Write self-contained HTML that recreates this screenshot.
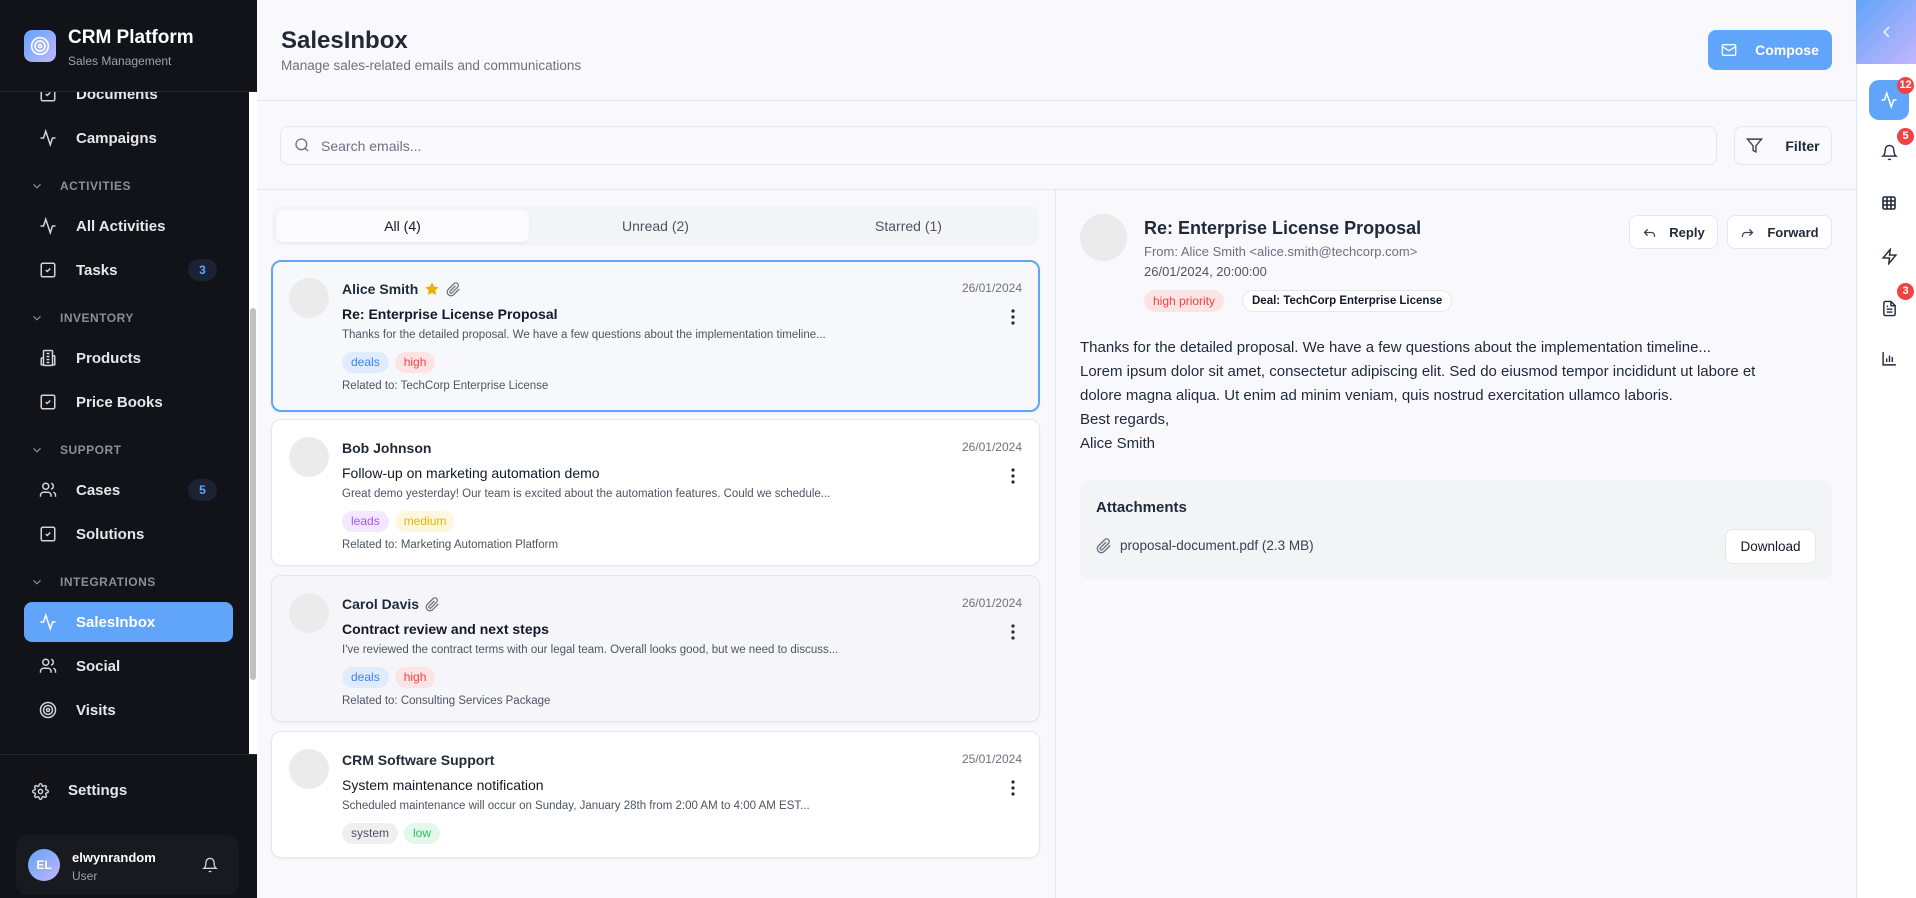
<!DOCTYPE html>
<html><head><meta charset="utf-8">
<style>
*{box-sizing:border-box;margin:0;padding:0}
body{width:1916px;height:898px;overflow:hidden;font-family:"Liberation Sans",sans-serif;background:#f9f9fd;position:relative;color:#1f2937}
.a{position:absolute}
.sb{left:0;top:0;width:257px;height:898px;background:#111318;color:#e5e7eb}
.nav{position:absolute;left:0;width:249px;height:40px;display:flex;align-items:center;font-size:15px;font-weight:bold;color:#e5e7eb}
.nav svg{position:absolute;left:39px}
.nav span{position:absolute;left:76px}
.sec{position:absolute;left:0;font-size:12px;font-weight:bold;color:#8b8f99;letter-spacing:.5px}
.sec svg{position:absolute;left:30px;top:0}
.sec span{position:absolute;left:60px;top:0}
.badge{position:absolute;left:188px;width:29px;height:22px;border-radius:11px;background:#1a2233;color:#60a5fa;font-size:12px;font-weight:bold;text-align:center;line-height:22px}
.card{position:absolute;left:271px;width:769px;border:1px solid #e5e7eb;border-radius:10px;background:#fff;box-shadow:0 1px 2px rgba(0,0,0,.05)}
.card .av{position:absolute;left:17px;top:17px;width:40px;height:40px;border-radius:50%;background:#ebebeb}
.card .nm{position:absolute;left:70px;top:20px;font-size:14px;font-weight:bold;color:#1f2937;display:flex;align-items:center;gap:6px}
.card .dt{position:absolute;right:17px;top:20px;font-size:12px;color:#6b7280}
.card .sj{position:absolute;left:70px;top:45px;font-size:14px;color:#111827}
.card .pv{position:absolute;left:70px;top:68px;font-size:11.5px;color:#4b5563}
.card .tg{position:absolute;left:70px;top:91px;display:flex;gap:6px}
.tag{height:21px;padding:0 9px;border-radius:11px;font-size:12px;line-height:21px}
.card .rl{position:absolute;left:70px;top:119px;font-size:11.5px;color:#4b5563}
.card .kb{position:absolute;right:24px;top:48px}
.btn{position:absolute;border:1px solid #e5e7eb;border-radius:8px;background:#fff;font-size:14px;font-weight:bold;color:#1f2937;display:flex;align-items:center;justify-content:center;gap:12px}
.ri{position:absolute;left:1869px;width:40px;height:40px;display:flex;align-items:center;justify-content:center}
.rb{position:absolute;width:17px;height:17px;border-radius:50%;background:#ef4444;color:#fff;font-size:11px;font-weight:bold;text-align:center;line-height:17px}
</style></head><body>

<!-- SIDEBAR -->
<div class="a sb">
 <div class="a" style="left:0;top:92px;width:257px;height:662px;overflow:hidden">
  <div class="nav" style="top:-18px"><svg width="18" height="18" viewBox="0 0 24 24" fill="none" stroke="#d1d5db" stroke-width="2"><rect x="3" y="3" width="18" height="18" rx="2"/><path d="M9 12l2 2 4-4"/></svg><span>Documents</span></div>
  <div class="nav" style="top:26px"><svg width="18" height="18" viewBox="0 0 24 24" fill="none" stroke="#d1d5db" stroke-width="2"><path d="M22 12h-4l-3 9L9 3l-3 9H2"/></svg><span>Campaigns</span></div>
  <div class="sec" style="top:87px"><svg width="14" height="14" viewBox="0 0 24 24" fill="none" stroke="#8b8f99" stroke-width="2"><path d="M6 9l6 6 6-6"/></svg><span>ACTIVITIES</span></div>
  <div class="nav" style="top:114px"><svg width="18" height="18" viewBox="0 0 24 24" fill="none" stroke="#d1d5db" stroke-width="2"><path d="M22 12h-4l-3 9L9 3l-3 9H2"/></svg><span>All Activities</span></div>
  <div class="nav" style="top:158px"><svg width="18" height="18" viewBox="0 0 24 24" fill="none" stroke="#d1d5db" stroke-width="2"><rect x="3" y="3" width="18" height="18" rx="2"/><path d="M9 12l2 2 4-4"/></svg><span>Tasks</span><div class="badge" style="top:9px">3</div></div>
  <div class="sec" style="top:219px"><svg width="14" height="14" viewBox="0 0 24 24" fill="none" stroke="#8b8f99" stroke-width="2"><path d="M6 9l6 6 6-6"/></svg><span>INVENTORY</span></div>
  <div class="nav" style="top:246px"><svg width="18" height="18" viewBox="0 0 24 24" fill="none" stroke="#d1d5db" stroke-width="2"><rect x="6" y="2" width="12" height="20" rx="1"/><path d="M6 12H4a1 1 0 00-1 1v8h3M18 9h2a1 1 0 011 1v11h-3M10 6h4M10 10h4M10 14h4M10 18h4"/></svg><span>Products</span></div>
  <div class="nav" style="top:290px"><svg width="18" height="18" viewBox="0 0 24 24" fill="none" stroke="#d1d5db" stroke-width="2"><rect x="3" y="3" width="18" height="18" rx="2"/><path d="M9 12l2 2 4-4"/></svg><span>Price Books</span></div>
  <div class="sec" style="top:351px"><svg width="14" height="14" viewBox="0 0 24 24" fill="none" stroke="#8b8f99" stroke-width="2"><path d="M6 9l6 6 6-6"/></svg><span>SUPPORT</span></div>
  <div class="nav" style="top:378px"><svg width="18" height="18" viewBox="0 0 24 24" fill="none" stroke="#d1d5db" stroke-width="2"><path d="M16 21v-2a4 4 0 00-4-4H6a4 4 0 00-4 4v2"/><circle cx="9" cy="7" r="4"/><path d="M22 21v-2a4 4 0 00-3-3.9M16 3.1a4 4 0 010 7.8"/></svg><span>Cases</span><div class="badge" style="top:9px">5</div></div>
  <div class="nav" style="top:422px"><svg width="18" height="18" viewBox="0 0 24 24" fill="none" stroke="#d1d5db" stroke-width="2"><rect x="3" y="3" width="18" height="18" rx="2"/><path d="M9 12l2 2 4-4"/></svg><span>Solutions</span></div>
  <div class="sec" style="top:483px"><svg width="14" height="14" viewBox="0 0 24 24" fill="none" stroke="#8b8f99" stroke-width="2"><path d="M6 9l6 6 6-6"/></svg><span>INTEGRATIONS</span></div>
  <div class="a" style="left:24px;top:510px;width:209px;height:40px;border-radius:8px;background:#60a5fa"></div>
  <div class="nav" style="top:510px;color:#fff"><svg width="18" height="18" viewBox="0 0 24 24" fill="none" stroke="#fff" stroke-width="2"><path d="M22 12h-4l-3 9L9 3l-3 9H2"/></svg><span>SalesInbox</span></div>
  <div class="nav" style="top:554px"><svg width="18" height="18" viewBox="0 0 24 24" fill="none" stroke="#d1d5db" stroke-width="2"><path d="M16 21v-2a4 4 0 00-4-4H6a4 4 0 00-4 4v2"/><circle cx="9" cy="7" r="4"/><path d="M22 21v-2a4 4 0 00-3-3.9M16 3.1a4 4 0 010 7.8"/></svg><span>Social</span></div>
  <div class="nav" style="top:598px"><svg width="18" height="18" viewBox="0 0 24 24" fill="none" stroke="#d1d5db" stroke-width="2"><circle cx="12" cy="12" r="10"/><circle cx="12" cy="12" r="6"/><circle cx="12" cy="12" r="2"/></svg><span>Visits</span></div>
  <div class="a" style="left:249px;top:0;width:8px;height:662px;background:#fff"></div>
  <div class="a" style="left:250px;top:216px;width:6px;height:372px;background:#c1c1c1;border-radius:3px"></div>
 </div>
 <div class="a" style="left:0;top:91px;width:257px;height:1px;background:#262932"></div>
 <div class="a" style="left:24px;top:30px;width:32px;height:32px;border-radius:8px;background:linear-gradient(135deg,#60a5fa,#c4b5fd);display:flex;align-items:center;justify-content:center"><svg width="20" height="20" viewBox="0 0 24 24" fill="none" stroke="#fff" stroke-width="2"><circle cx="12" cy="12" r="10"/><circle cx="12" cy="12" r="6"/><circle cx="12" cy="12" r="2"/></svg></div>
 <div class="a" style="left:68px;top:27px;font-size:19px;font-weight:bold;color:#fff">CRM Platform</div>
 <div class="a" style="left:68px;top:54px;font-size:12px;color:#9ca3af">Sales Management</div>
 <div class="a" style="left:0;top:754px;width:257px;height:1px;background:#262932"></div>
 <div class="a" style="left:32px;top:783px"><svg width="17" height="17" viewBox="0 0 24 24" fill="none" stroke="#d1d5db" stroke-width="2"><circle cx="12" cy="12" r="3"/><path d="M19.4 15a1.65 1.65 0 00.33 1.82l.06.06a2 2 0 11-2.83 2.83l-.06-.06a1.65 1.65 0 00-1.82-.33 1.65 1.65 0 00-1 1.51V21a2 2 0 11-4 0v-.09A1.65 1.65 0 009 19.4a1.65 1.65 0 00-1.82.33l-.06.06a2 2 0 11-2.83-2.83l.06-.06A1.65 1.65 0 004.68 15a1.65 1.65 0 00-1.51-1H3a2 2 0 110-4h.09A1.65 1.65 0 004.6 9a1.65 1.65 0 00-.33-1.82l-.06-.06a2 2 0 112.83-2.83l.06.06A1.65 1.65 0 009 4.68a1.65 1.65 0 001-1.51V3a2 2 0 114 0v.09a1.65 1.65 0 001 1.51 1.65 1.65 0 001.82-.33l.06-.06a2 2 0 112.83 2.83l-.06.06A1.65 1.65 0 0019.4 9a1.65 1.65 0 001.51 1H21a2 2 0 110 4h-.09a1.65 1.65 0 00-1.51 1z"/></svg></div>
 <div class="a" style="left:68px;top:782px;font-size:15px;font-weight:bold;color:#e5e7eb">Settings</div>
 <div class="a" style="left:16px;top:835px;width:223px;height:60px;border-radius:12px;background:#181a20"></div>
 <div class="a" style="left:28px;top:849px;width:32px;height:32px;border-radius:50%;background:linear-gradient(135deg,#60a5fa,#c4b5fd);color:#fff;font-size:12px;font-weight:bold;text-align:center;line-height:32px">EL</div>
 <div class="a" style="left:72px;top:850px;font-size:13px;font-weight:bold;color:#fff">elwynrandom</div>
 <div class="a" style="left:72px;top:869px;font-size:12px;color:#9ca3af">User</div>
 <div class="a" style="left:202px;top:857px"><svg width="16" height="16" viewBox="0 0 24 24" fill="none" stroke="#d1d5db" stroke-width="2"><path d="M18 8A6 6 0 006 8c0 7-3 9-3 9h18s-3-2-3-9M13.7 21a2 2 0 01-3.4 0"/></svg></div>
</div>

<!-- HEADER -->
<div class="a" style="left:281px;top:27px;font-size:24px;font-weight:bold;color:#1f2937">SalesInbox</div>
<div class="a" style="left:281px;top:58px;font-size:13.5px;color:#6b7280">Manage sales-related emails and communications</div>
<div class="a" style="left:1708px;top:30px;width:124px;height:40px;border-radius:8px;background:#60a5fa;color:#fff;font-size:14px;font-weight:bold;display:flex;align-items:center;justify-content:center;gap:18px"><svg width="16" height="16" viewBox="0 0 24 24" fill="none" stroke="#fff" stroke-width="2"><rect x="2" y="4" width="20" height="16" rx="2"/><path d="M22 7l-10 6L2 7"/></svg>Compose</div>
<div class="a" style="left:257px;top:100px;width:1599px;height:1px;background:#e5e7eb"></div>
<div class="a" style="left:280px;top:126px;width:1437px;height:39px;border:1px solid #e5e7eb;border-radius:8px;background:#fafafe"></div>
<div class="a" style="left:294px;top:137px"><svg width="16" height="16" viewBox="0 0 24 24" fill="none" stroke="#6b7280" stroke-width="2"><circle cx="11" cy="11" r="8"/><path d="M21 21l-4.3-4.3"/></svg></div>
<div class="a" style="left:321px;top:138px;font-size:14px;color:#6b7280">Search emails...</div>
<div class="btn" style="left:1734px;top:126px;width:98px;height:39px;background:#fafafe;gap:22px"><svg width="17" height="17" viewBox="0 0 24 24" fill="none" stroke="#374151" stroke-width="2"><path d="M22 3H2l8 9.5V19l4 2v-8.5L22 3z"/></svg>Filter</div>
<div class="a" style="left:257px;top:189px;width:1599px;height:1px;background:#e5e7eb"></div>
<div class="a" style="left:1055px;top:190px;width:1px;height:708px;background:#e5e7eb"></div>

<!-- TABS -->
<div class="a" style="left:272px;top:206px;width:767px;height:40px;border-radius:10px;background:#f3f4f6"></div>
<div class="a" style="left:276px;top:210px;width:253px;height:32px;border-radius:7px;background:#fbfbfe;box-shadow:0 1px 2px rgba(0,0,0,.06)"></div>
<div class="a" style="left:276px;top:218px;width:253px;text-align:center;font-size:14px;color:#111827">All (4)</div>
<div class="a" style="left:529px;top:218px;width:253px;text-align:center;font-size:14px;color:#4b5563">Unread (2)</div>
<div class="a" style="left:782px;top:218px;width:253px;text-align:center;font-size:14px;color:#4b5563">Starred (1)</div>

<!-- CARDS -->
<div class="card" style="top:260px;height:152px;border:2px solid #60a5fa;background:#f7f8fc">
 <div class="av" style="left:16px;top:16px"></div>
 <div class="nm" style="left:69px;top:19px">Alice Smith <svg width="16" height="16" viewBox="0 0 24 24" fill="#eab308"><path d="M12 2l3.1 6.3 6.9 1-5 4.9 1.2 6.8L12 17.8 5.8 21l1.2-6.8-5-4.9 6.9-1z"/></svg><svg width="15" height="15" viewBox="0 0 24 24" fill="none" stroke="#6b7280" stroke-width="2"><path d="M21.4 11.1l-9.2 9.2a6 6 0 01-8.5-8.5l9.2-9.2a4 4 0 015.7 5.7l-9.2 9.2a2 2 0 01-2.8-2.8l8.5-8.5"/></svg></div>
 <div class="dt" style="top:19px;right:16px">26/01/2024</div>
 <div class="sj" style="left:69px;top:44px;font-weight:bold">Re: Enterprise License Proposal</div>
 <div class="pv" style="left:69px;top:67px">Thanks for the detailed proposal. We have a few questions about the implementation timeline...</div>
 <div class="tg" style="left:69px;top:90px"><div class="tag" style="background:#e0ecfd;color:#3b82f6">deals</div><div class="tag" style="background:#fde4e4;color:#ef4444">high</div></div>
 <div class="rl" style="left:69px;top:118px">Related to: TechCorp Enterprise License</div>
 <div class="kb" style="right:23px;top:47px"><svg width="4" height="16" viewBox="0 0 4 16" fill="#1f2937"><circle cx="2" cy="2" r="1.6"/><circle cx="2" cy="8" r="1.6"/><circle cx="2" cy="14" r="1.6"/></svg></div>
</div>

<div class="card" style="top:419px;height:147px">
 <div class="av"></div>
 <div class="nm">Bob Johnson</div>
 <div class="dt">26/01/2024</div>
 <div class="sj">Follow-up on marketing automation demo</div>
 <div class="pv">Great demo yesterday! Our team is excited about the automation features. Could we schedule...</div>
 <div class="tg"><div class="tag" style="background:#f3e8ff;color:#a855f7">leads</div><div class="tag" style="background:#fef7e0;color:#eab308">medium</div></div>
 <div class="rl">Related to: Marketing Automation Platform</div>
 <div class="kb"><svg width="4" height="16" viewBox="0 0 4 16" fill="#1f2937"><circle cx="2" cy="2" r="1.6"/><circle cx="2" cy="8" r="1.6"/><circle cx="2" cy="14" r="1.6"/></svg></div>
</div>

<div class="card" style="top:575px;height:147px;background:#f6f6fa">
 <div class="av"></div>
 <div class="nm">Carol Davis <svg width="15" height="15" viewBox="0 0 24 24" fill="none" stroke="#6b7280" stroke-width="2"><path d="M21.4 11.1l-9.2 9.2a6 6 0 01-8.5-8.5l9.2-9.2a4 4 0 015.7 5.7l-9.2 9.2a2 2 0 01-2.8-2.8l8.5-8.5"/></svg></div>
 <div class="dt">26/01/2024</div>
 <div class="sj" style="font-weight:bold">Contract review and next steps</div>
 <div class="pv">I've reviewed the contract terms with our legal team. Overall looks good, but we need to discuss...</div>
 <div class="tg"><div class="tag" style="background:#e0ecfd;color:#3b82f6">deals</div><div class="tag" style="background:#fde4e4;color:#ef4444">high</div></div>
 <div class="rl">Related to: Consulting Services Package</div>
 <div class="kb"><svg width="4" height="16" viewBox="0 0 4 16" fill="#1f2937"><circle cx="2" cy="2" r="1.6"/><circle cx="2" cy="8" r="1.6"/><circle cx="2" cy="14" r="1.6"/></svg></div>
</div>

<div class="card" style="top:731px;height:127px">
 <div class="av"></div>
 <div class="nm">CRM Software Support</div>
 <div class="dt">25/01/2024</div>
 <div class="sj">System maintenance notification</div>
 <div class="pv">Scheduled maintenance will occur on Sunday, January 28th from 2:00 AM to 4:00 AM EST...</div>
 <div class="tg"><div class="tag" style="background:#efeff1;color:#4b5563">system</div><div class="tag" style="background:#e3f8ea;color:#22c55e">low</div></div>
 <div class="kb"><svg width="4" height="16" viewBox="0 0 4 16" fill="#1f2937"><circle cx="2" cy="2" r="1.6"/><circle cx="2" cy="8" r="1.6"/><circle cx="2" cy="14" r="1.6"/></svg></div>
</div>

<!-- DETAIL -->
<div class="a" style="left:1080px;top:214px;width:47px;height:47px;border-radius:50%;background:#ebebeb"></div>
<div class="a" style="left:1144px;top:218px;font-size:18px;font-weight:bold;color:#1f2937">Re: Enterprise License Proposal</div>
<div class="a" style="left:1144px;top:244px;font-size:13px;color:#6b7280">From: Alice Smith &lt;alice.smith@techcorp.com&gt;</div>
<div class="a" style="left:1144px;top:264px;font-size:13px;color:#4b5563">26/01/2024, 20:00:00</div>
<div class="a tag" style="left:1144px;top:290px;height:22px;line-height:22px;background:#fde4e4;color:#ef4444">high priority</div>
<div class="a tag" style="left:1242px;top:290px;height:22px;line-height:20px;border:1px solid #e5e7eb;background:#fff;color:#111827;font-weight:bold;font-size:11.5px">Deal: TechCorp Enterprise License</div>
<div class="btn" style="left:1629px;top:215px;width:89px;height:34px;font-weight:bold;font-size:13px"><svg width="15" height="15" viewBox="0 0 24 24" fill="none" stroke="#374151" stroke-width="2"><path d="M9 17l-5-5 5-5M4 12h11a5 5 0 015 5v2"/></svg>Reply</div>
<div class="btn" style="left:1727px;top:215px;width:105px;height:34px;font-weight:bold;font-size:13px"><svg width="15" height="15" viewBox="0 0 24 24" fill="none" stroke="#374151" stroke-width="2"><path d="M15 17l5-5-5-5M20 12H9a5 5 0 00-5 5v2"/></svg>Forward</div>
<div class="a" style="left:1080px;top:336px;font-size:15px;line-height:24px;color:#1f2937;width:720px">Thanks for the detailed proposal. We have a few questions about the implementation timeline...<br>Lorem ipsum dolor sit amet, consectetur adipiscing elit. Sed do eiusmod tempor incididunt ut labore et dolore magna aliqua. Ut enim ad minim veniam, quis nostrud exercitation ullamco laboris.<br>Best regards,<br>Alice Smith</div>
<div class="a" style="left:1080px;top:480px;width:752px;height:99px;border-radius:10px;background:#f3f4f6"></div>
<div class="a" style="left:1096px;top:499px;font-size:15px;font-weight:bold;color:#1f2937">Attachments</div>
<div class="a" style="left:1096px;top:538px"><svg width="16" height="16" viewBox="0 0 24 24" fill="none" stroke="#6b7280" stroke-width="2"><path d="M21.4 11.1l-9.2 9.2a6 6 0 01-8.5-8.5l9.2-9.2a4 4 0 015.7 5.7l-9.2 9.2a2 2 0 01-2.8-2.8l8.5-8.5"/></svg></div>
<div class="a" style="left:1120px;top:538px;font-size:13.5px;color:#374151">proposal-document.pdf (2.3 MB)</div>
<div class="btn" style="left:1725px;top:529px;width:91px;height:35px;font-size:13.5px;font-weight:normal;color:#111827">Download</div>

<!-- RIGHT RAIL -->
<div class="a" style="left:1856px;top:0;width:60px;height:898px;background:#fff;border-left:1px solid #dbe6fb"></div>
<div class="a" style="left:1856px;top:0;width:60px;height:64px;background:linear-gradient(135deg,#60a5fa,#c4b5fd)"></div>
<div class="a" style="left:1881px;top:25px"><svg width="12" height="14" viewBox="0 0 12 14" fill="none" stroke="#e8edff" stroke-width="1.6"><path d="M8 2L3 7l5 5"/></svg></div>
<div class="ri" style="top:80px;background:#60a5fa;border-radius:10px"><svg width="18" height="18" viewBox="0 0 24 24" fill="none" stroke="#fff" stroke-width="2"><path d="M22 12h-4l-3 9L9 3l-3 9H2"/></svg></div>
<div class="rb" style="left:1897px;top:77px">12</div>
<div class="ri" style="top:132px"><svg width="17" height="17" viewBox="0 0 24 24" fill="none" stroke="#1f2937" stroke-width="2"><path d="M18 8A6 6 0 006 8c0 7-3 9-3 9h18s-3-2-3-9M13.7 21a2 2 0 01-3.4 0"/></svg></div>
<div class="rb" style="left:1897px;top:128px">5</div>
<div class="ri" style="top:183px"><svg width="16" height="16" viewBox="0 0 24 24" fill="none" stroke="#1f2937" stroke-width="2.4"><rect x="3" y="3" width="18" height="18" rx="2"/><path d="M3 9h18M3 15h18M9 3v18M15 3v18"/></svg></div>
<div class="ri" style="top:236px"><svg width="17" height="17" viewBox="0 0 24 24" fill="none" stroke="#1f2937" stroke-width="2"><path d="M13 2L3 14h9l-1 8 10-12h-9l1-8z"/></svg></div>
<div class="ri" style="top:288px"><svg width="17" height="17" viewBox="0 0 24 24" fill="none" stroke="#1f2937" stroke-width="2"><path d="M14 2H6a2 2 0 00-2 2v16a2 2 0 002 2h12a2 2 0 002-2V8z"/><path d="M14 2v6h6M16 13H8M16 17H8M10 9H8"/></svg></div>
<div class="rb" style="left:1897px;top:283px">3</div>
<div class="ri" style="top:338px"><svg width="17" height="17" viewBox="0 0 24 24" fill="none" stroke="#1f2937" stroke-width="2"><path d="M3 3v18h18M8 17v-5M12 17V8M16 17v-7"/></svg></div>
</body></html>
